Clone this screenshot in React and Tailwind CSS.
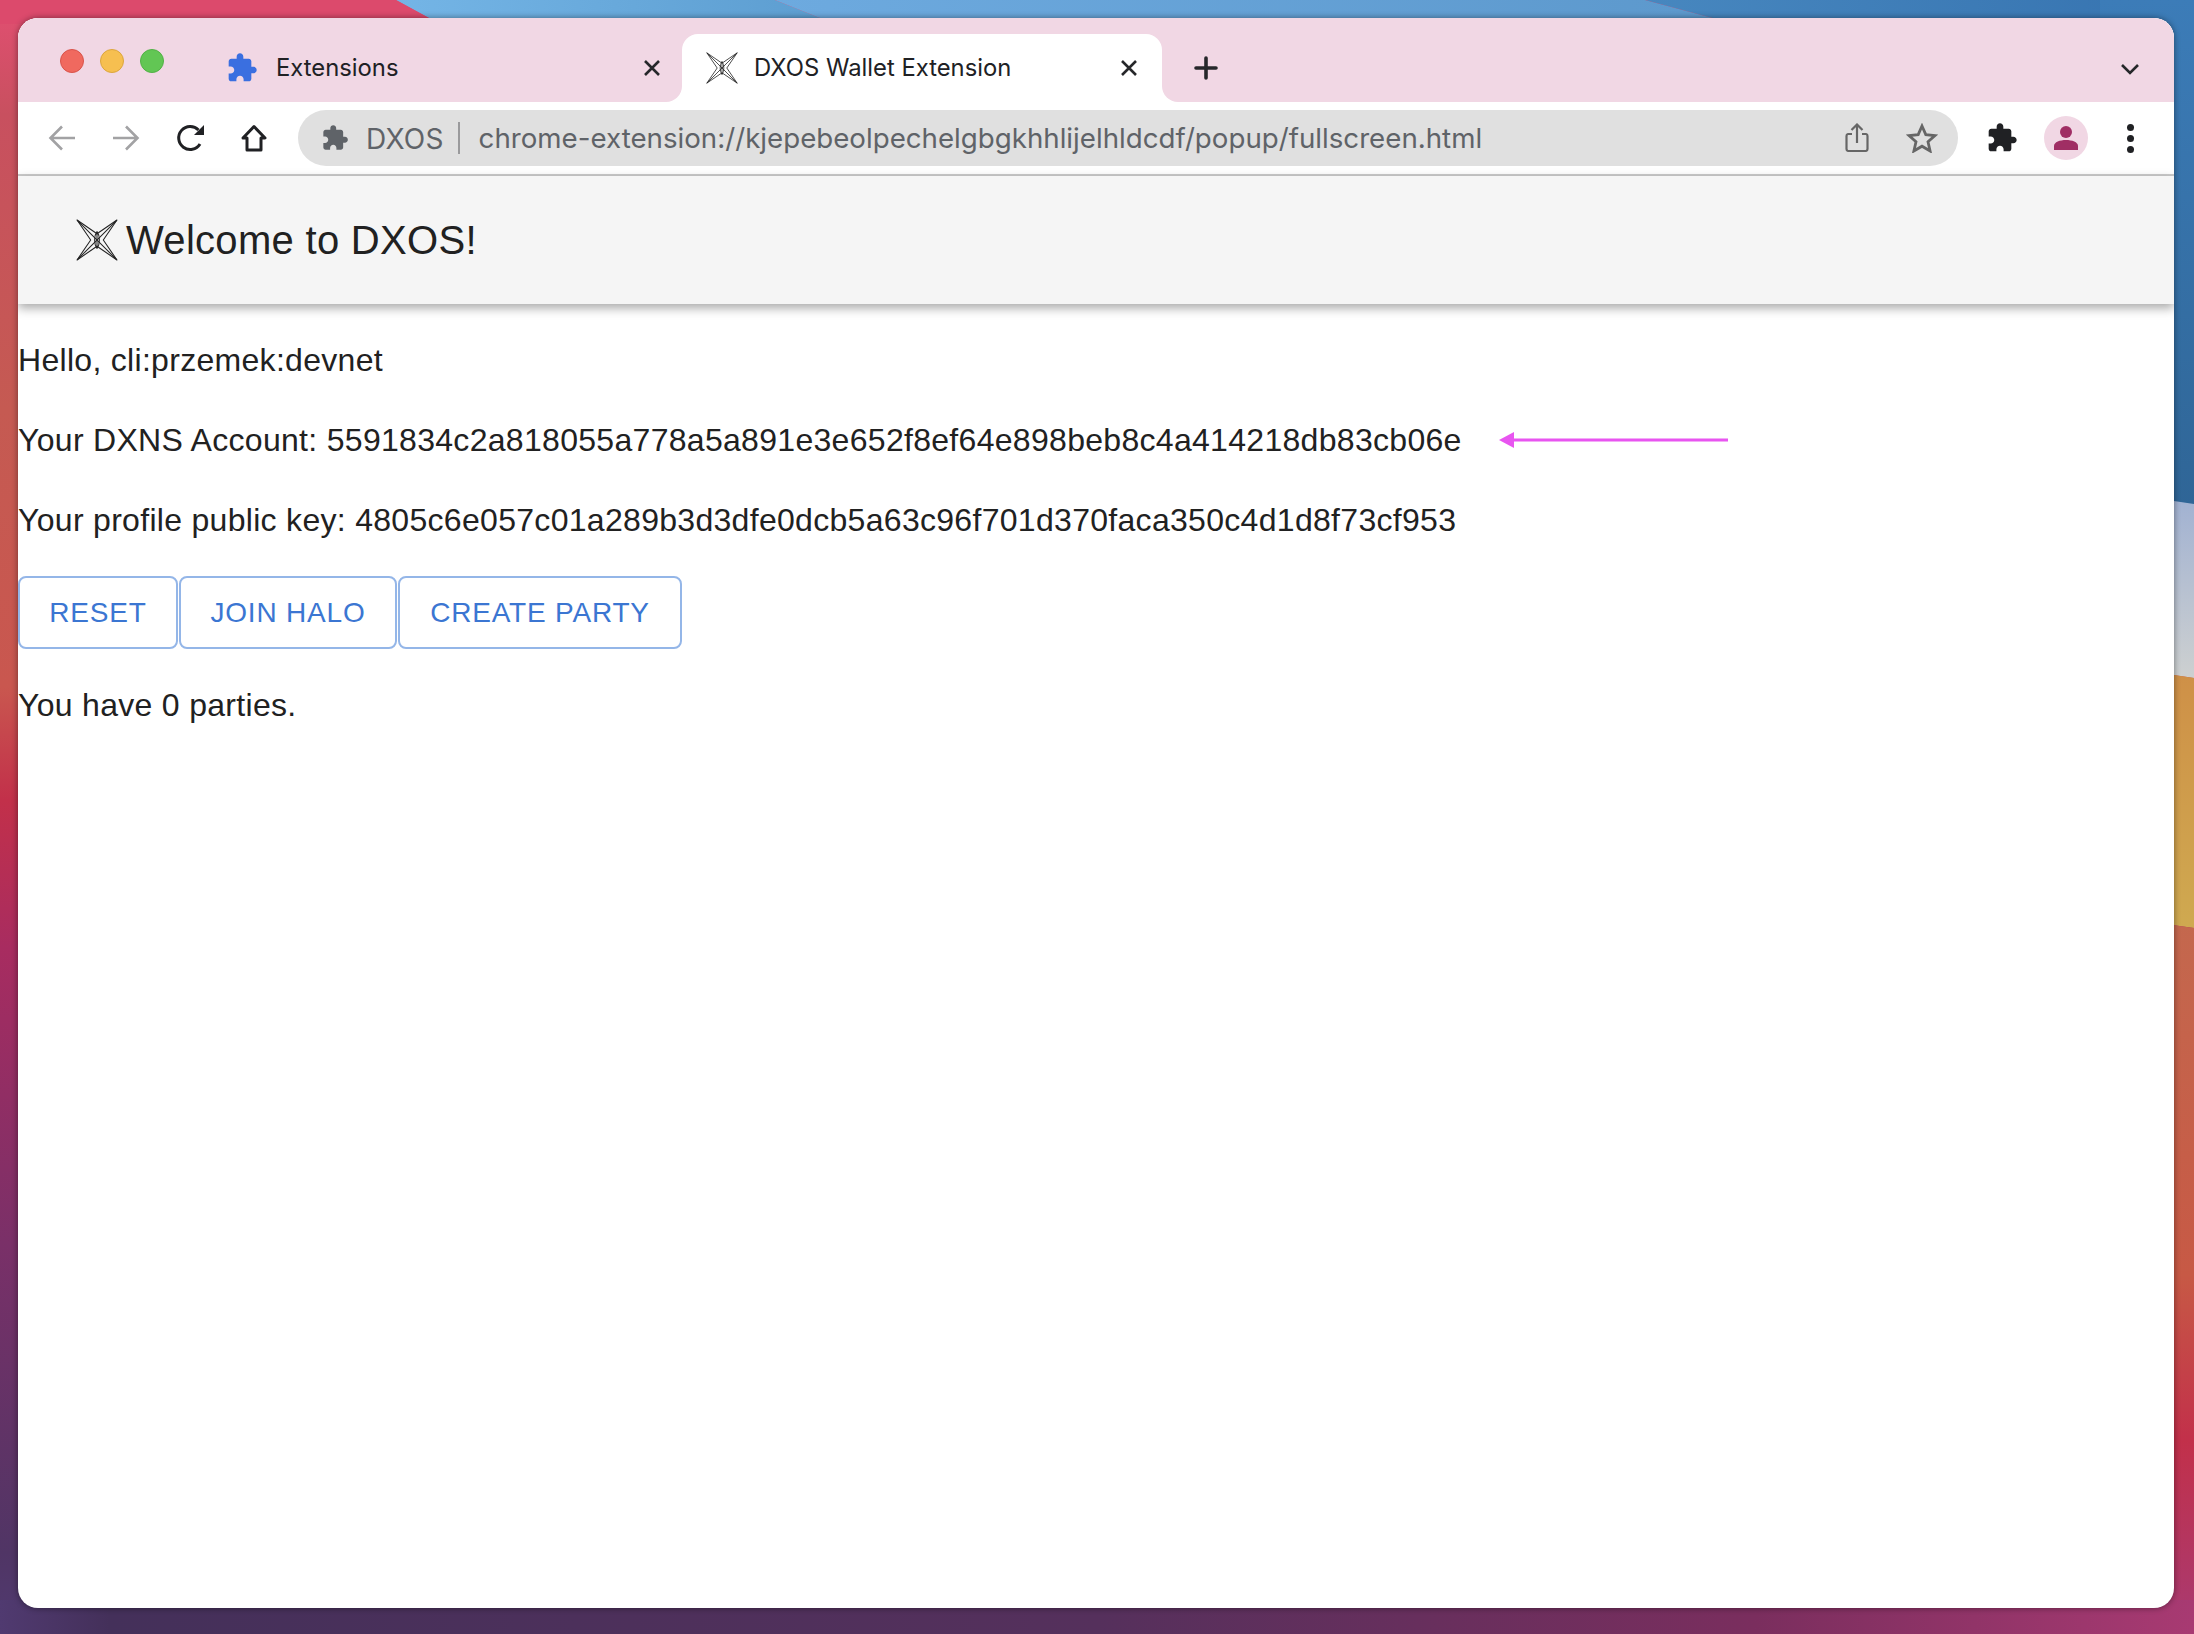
const PUZZLE = 'M20.5 11H19V7c0-1.1-.9-2-2-2h-4V3.5C13 2.12 11.88 1 10.5 1S8 2.12 8 3.5V5H4c-1.1 0-1.99.9-1.99 2v3.8H3.5c1.49 0 2.7 1.21 2.7 2.7s-1.21 2.7-2.7 2.7H2V20c0 1.1.9 2 2 2h3.8v-1.5c0-1.49 1.21-2.7 2.7-2.7 1.49 0 2.7 1.21 2.7 2.7V22H17c1.1 0 2-.9 2-2v-4h1.5c1.38 0 2.5-1.12 2.5-2.5S21.88 11 20.5 11z';

function Wallpaper() {
  return (
    <svg className="absolute inset-0" width="2194" height="1634" viewBox="0 0 2194 1634">
      <defs>
        <linearGradient id="left" x1="0" y1="0" x2="0" y2="1">
          <stop offset="0" stopColor="#e24f72" />
          <stop offset="0.07" stopColor="#c8505f" />
          <stop offset="0.25" stopColor="#c55a52" />
          <stop offset="0.42" stopColor="#c9574f" />
          <stop offset="0.49" stopColor="#c2304a" />
          <stop offset="0.58" stopColor="#a82c60" />
          <stop offset="0.76" stopColor="#7a3068" />
          <stop offset="0.95" stopColor="#503565" />
          <stop offset="1" stopColor="#503a70" />
        </linearGradient>
        <linearGradient id="top1" x1="0" y1="0" x2="1" y2="0">
          <stop offset="0" stopColor="#74b5e6" />
          <stop offset="1" stopColor="#5c9dd0" />
        </linearGradient>
        <linearGradient id="top2" x1="0" y1="0" x2="1" y2="0">
          <stop offset="0" stopColor="#6daadf" />
          <stop offset="1" stopColor="#5c98cc" />
        </linearGradient>
        <linearGradient id="top3" x1="0" y1="0" x2="1" y2="0">
          <stop offset="0" stopColor="#4787bf" />
          <stop offset="1" stopColor="#3673b0" />
        </linearGradient>
        <linearGradient id="blue" x1="0" y1="0" x2="0" y2="1">
          <stop offset="0" stopColor="#3c7cb8" />
          <stop offset="1" stopColor="#2f6596" />
        </linearGradient>
        <linearGradient id="sky" x1="0" y1="0" x2="0" y2="1">
          <stop offset="0" stopColor="#9fb0d2" />
          <stop offset="1" stopColor="#cdd0d0" />
        </linearGradient>
        <linearGradient id="orange" x1="0" y1="0" x2="0" y2="1">
          <stop offset="0" stopColor="#cf8f47" />
          <stop offset="1" stopColor="#cfa950" />
        </linearGradient>
        <linearGradient id="red" x1="0" y1="0" x2="0" y2="1">
          <stop offset="0" stopColor="#c4684e" />
          <stop offset="0.5" stopColor="#c75945" />
          <stop offset="0.73" stopColor="#c2304a" />
          <stop offset="1" stopColor="#a83a72" />
        </linearGradient>
        <linearGradient id="bottom" x1="0" y1="0" x2="1" y2="0">
          <stop offset="0" stopColor="#503a70" />
          <stop offset="0.05" stopColor="#44305a" />
          <stop offset="0.5" stopColor="#55305c" />
          <stop offset="0.8" stopColor="#7a2e5e" />
          <stop offset="1" stopColor="#a83a72" />
        </linearGradient>
      </defs>
      <rect width="2194" height="1634" fill="url(#left)" />
      <polygon points="396,0 775,0 835,24 440,24" fill="url(#top1)" />
      <polygon points="775,0 1645,0 1735,24 835,24" fill="url(#top2)" />
      <polygon points="1645,0 2194,0 2194,24 1735,24" fill="url(#top3)" />
      <polygon points="0,0 396,0 440,24 0,24" fill="#dc4a6c" />
      <rect x="2100" y="0" width="94" height="510" fill="url(#blue)" />
      <polygon points="2100,490 2194,504 2194,678 2100,664" fill="url(#sky)" />
      <polygon points="2100,664 2194,678 2194,928 2100,915" fill="url(#orange)" />
      <polygon points="2100,915 2194,928 2194,1634 2100,1634" fill="url(#red)" />
      <rect y="1600" width="2194" height="34" fill="url(#bottom)" />
    </svg>
  );
}

function DxosLogo({ size }) {
  return (
    <svg width={size} height={size} viewBox="0 0 40 40" fill="none" stroke="#222" strokeWidth="1" strokeLinejoin="round" className="shrink-0">
      <path d="M1 1 L20 14 L39 1 L26 20 L39 39 L20 26 L1 39 L14 20 Z" />
      <path d="M1 1 L39 39 M39 1 L1 39" />
      <path d="M20 12 C17 16 17 24 20 28 C23 24 23 16 20 12Z M20 12 V28" />
    </svg>
  );
}

function Puzzle({ size, color }) {
  return (
    <svg width={size} height={size} viewBox="0 0 24 24" fill={color} className="shrink-0">
      <path d={PUZZLE} />
    </svg>
  );
}

function CloseIcon() {
  return (
    <svg width="18" height="18" viewBox="0 0 18 18" stroke="#26272a" strokeWidth="2.6" className="shrink-0">
      <path d="M2 2 L16 16 M16 2 L2 16" />
    </svg>
  );
}

function TabStrip() {
  return (
    <div className="flex h-[84px] bg-white font-['Inter',sans-serif] text-[23.8px] text-[#202124]">
      <div className="flex w-[664px] items-start rounded-br-[16px] bg-[#f1d7e4] pt-[31px]">
        <div className="ml-[42px] flex gap-4">
          <span className="size-6 rounded-full border border-[#d9534a] bg-[#f0695f]" />
          <span className="size-6 rounded-full border border-[#dca63d] bg-[#f6bf50]" />
          <span className="size-6 rounded-full border border-[#52b146] bg-[#62c654]" />
        </div>
        <div className="ml-[62px] mt-[7px] flex h-6 items-center">
          <Puzzle size={32} color="#3a6fe0" />
          <span className="ml-[18px]">Extensions</span>
        </div>
        <div className="ml-auto mr-[21px] mt-[10px]">
          <CloseIcon />
        </div>
      </div>
      <div className="bg-[#f1d7e4] pt-4">
        <div className="flex h-[68px] w-[480px] items-center rounded-t-[16px] bg-white px-6">
          <DxosLogo size={32} />
          <span className="ml-[16px]">DXOS Wallet Extension</span>
          <div className="ml-auto">
            <CloseIcon />
          </div>
        </div>
      </div>
      <div className="flex flex-1 items-start justify-between rounded-bl-[16px] bg-[#f1d7e4] pt-[38px] pl-[32px] pr-[34px]">
        <svg width="24" height="24" viewBox="0 0 24 24" stroke="#26272a" strokeWidth="3.6" strokeLinecap="round">
          <path d="M12 2 V22 M2 12 H22" />
        </svg>
        <svg width="20" height="12" viewBox="0 0 20 12" fill="none" stroke="#26272a" strokeWidth="2.6" className="mt-[7px]">
          <path d="M2 2 L10 10 L18 2" />
        </svg>
      </div>
    </div>
  );
}

function Toolbar() {
  return (
    <div className="flex h-[74px] items-center border-b-2 border-[#cccccc] bg-white">
      <div className="ml-[30px] flex w-[250px] items-center">
        <svg width="28" height="26" viewBox="0 0 28 26" fill="none" stroke="#a2a2a4" strokeWidth="2.6" className="shrink-0">
          <path d="M27 13 H3 M14 1.5 L2.5 13 L14 24.5" />
        </svg>
        <svg width="28" height="26" viewBox="0 0 28 26" fill="none" stroke="#a2a2a4" strokeWidth="2.6" className="ml-[36px] shrink-0">
          <path d="M1 13 H25 M14 1.5 L25.5 13 L14 24.5" />
        </svg>
        <svg width="30" height="28" viewBox="0 0 30 28" fill="none" className="ml-[36px] shrink-0">
          <path d="M24 20 A11.5 11.5 0 1 1 22.5 6" stroke="#202124" strokeWidth="3" />
          <path d="M28 1 V11 H18 Z" fill="#202124" />
        </svg>
        <svg width="28" height="28" viewBox="0 0 28 28" fill="none" stroke="#202124" strokeWidth="3" className="ml-[34px] shrink-0">
          <path d="M14 2.5 L25 14 H21 V26 H7 V14 H3 Z" strokeLinejoin="round" />
        </svg>
      </div>
      <div className="flex h-14 w-[1660px] items-center rounded-full bg-[#e0e0e0] pl-[23px] pr-[20px] font-['Inter',sans-serif] text-[28px] text-[#5f6368]">
        <Puzzle size={28} color="#5f6368" />
        <span className="ml-[17px] mt-[1px] tracking-[0.2px]">DXOS</span>
        <span className="ml-[14px] h-[32px] w-[2px] bg-[#9a9a9c]" />
        <span className="ml-[19px] mt-[1px] text-[27.7px] whitespace-nowrap">chrome-extension://kjepebeolpechelgbgkhhlijelhldcdf/popup/fullscreen.html</span>
        <svg width="24" height="30" viewBox="0 0 24 30" fill="none" stroke="#666" strokeWidth="2.2" className="ml-auto shrink-0">
          <path d="M7 11 H3 A2 2 0 0 0 1.5 13 V26 A2 2 0 0 0 3 28 H21 A2 2 0 0 0 22.5 26 V13 A2 2 0 0 0 21 11 H17" />
          <path d="M12 20 V2 M6.5 7 L12 1.5 L17.5 7" />
        </svg>
        <svg width="32" height="30" viewBox="0 0 32 30" fill="none" stroke="#666" strokeWidth="2.8" className="ml-[37px] shrink-0">
          <path d="M16 3 L19.8 11.6 L29 12.5 L22 18.7 L24.1 28 L16 23.2 L7.9 28 L10 18.7 L3 12.5 L12.2 11.6 Z" strokeLinejoin="miter" />
        </svg>
      </div>
      <div className="ml-[28px] flex items-center">
        <Puzzle size={32} color="#202124" />
        <div className="ml-[26px] flex size-11 items-center justify-center rounded-full bg-[#f1d7e4]">
          <svg width="26" height="26" viewBox="0 0 26 26" fill="#a02e64">
            <circle cx="13" cy="7" r="6" />
            <path d="M1 25 V21 C1 17 7 15 13 15 C19 15 25 17 25 21 V25 Z" />
          </svg>
        </div>
        <div className="ml-[39px] flex flex-col gap-[4px]">
          <span className="size-[7px] rounded-full bg-[#202124]" />
          <span className="size-[7px] rounded-full bg-[#202124]" />
          <span className="size-[7px] rounded-full bg-[#202124]" />
        </div>
      </div>
    </div>
  );
}

function Page() {
  const btn = 'h-[73px] rounded-[8px] border-2 border-[#94b6e8] bg-white text-[28px] tracking-[0.8px] text-[#3b76d2] uppercase';
  return (
    <div className="font-['Liberation_Sans',sans-serif] text-[#212121]">
      <div className="flex h-[128px] items-center gap-[8px] bg-[#f5f5f5] pl-[58px] text-[40px] tracking-[0.3px] shadow-[0_4px_10px_rgba(0,0,0,0.35)]">
        <DxosLogo size={42} />
        <span>Welcome to DXOS!</span>
      </div>
      <div className="text-[32px] leading-[48px] tracking-[0.3px]">
        <p className="mt-[32px]">Hello, cli:przemek:devnet</p>
        <div className="mt-[32px] flex items-center">
          <p>Your DXNS Account: 5591834c2a818055a778a5a891e3e652f8ef64e898beb8c4a414218db83cb06e</p>
          <svg width="229" height="16" viewBox="0 0 229 16" className="ml-[37px]">
            <path d="M0 8 L15 0 V6.5 H229 V9.5 H15 V16 Z" fill="#e855f0" />
          </svg>
        </div>
        <p className="mt-[32px]">Your profile public key: 4805c6e057c01a289b3d3dfe0dcb5a63c96f701d370faca350c4d1d8f73cf953</p>
      </div>
      <div className="mt-[32px] flex gap-[1px]">
        <button className={`${btn} w-[160px]`}>Reset</button>
        <button className={`${btn} w-[218px]`}>Join Halo</button>
        <button className={`${btn} w-[284px]`}>Create Party</button>
      </div>
      <p className="mt-[32px] text-[32px] leading-[48px] tracking-[0.3px]">You have 0 parties.</p>
    </div>
  );
}

export default function App() {
  return (
    <div className="relative h-[1634px] w-[2194px] overflow-hidden pt-[18px] pl-[18px]">
      <Wallpaper />
      <div className="relative h-[1590px] w-[2156px] overflow-hidden rounded-[20px] bg-white shadow-[0_0_6px_rgba(0,0,0,0.45)]">
        <TabStrip />
        <Toolbar />
        <Page />
      </div>
    </div>
  );
}
